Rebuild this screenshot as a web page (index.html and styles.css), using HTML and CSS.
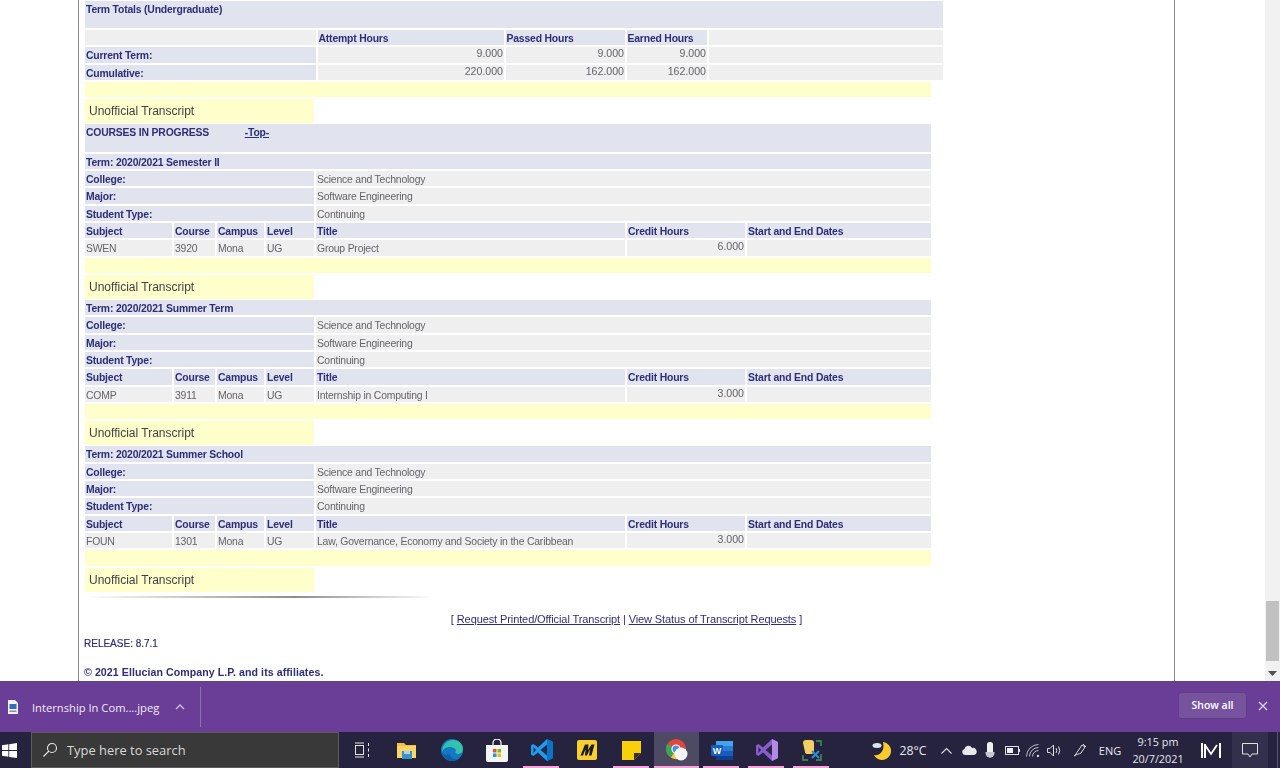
FILE: index.html
```html
<!DOCTYPE html>
<html lang="en">
<head>
<meta charset="utf-8">
<title>Academic Transcript</title>
<link rel="stylesheet" href="styles.css">
</head>
<body>
<div class="viewport">
  <main class="page">
    <section class="totals">
      <div class="cell head span-all tall">Term Totals (Undergraduate)</div>
      <div class="cell plain"></div>
      <div class="cell head">Attempt Hours</div>
      <div class="cell head">Passed Hours</div>
      <div class="cell head">Earned Hours</div>
      <div class="cell plain"></div>
      <div class="cell head">Current Term:</div>
      <div class="cell plain num">9.000</div>
      <div class="cell plain num">9.000</div>
      <div class="cell plain num">9.000</div>
      <div class="cell plain"></div>
      <div class="cell head">Cumulative:</div>
      <div class="cell plain num">220.000</div>
      <div class="cell plain num">162.000</div>
      <div class="cell plain num">162.000</div>
      <div class="cell plain"></div>
    </section>
    <div class="yellow-bar"></div>
    <div class="transcript">Unofficial Transcript</div>
    <div class="cell head courses">COURSES IN PROGRESS <a class="top-link" href="#">-Top-</a></div>

    <section class="term">
      <div class="cell head span-all">Term: 2020/2021 Semester II</div>
      <div class="cell head label">College:</div><div class="cell plain value">Science and Technology</div>
      <div class="cell head label">Major:</div><div class="cell plain value">Software Engineering</div>
      <div class="cell head label">Student Type:</div><div class="cell plain value">Continuing</div>
      <div class="cell head">Subject</div><div class="cell head">Course</div><div class="cell head">Campus</div><div class="cell head">Level</div><div class="cell head">Title</div><div class="cell head">Credit Hours</div><div class="cell head">Start and End Dates</div>
      <div class="cell plain">SWEN</div><div class="cell plain">3920</div><div class="cell plain">Mona</div><div class="cell plain">UG</div><div class="cell plain">Group Project</div><div class="cell plain num">6.000</div><div class="cell plain"></div>
      <div class="cell yellow span-all"></div>
    </section>
    <div class="transcript after-term">Unofficial Transcript</div>

    <section class="term">
      <div class="cell head span-all">Term: 2020/2021 Summer Term</div>
      <div class="cell head label">College:</div><div class="cell plain value">Science and Technology</div>
      <div class="cell head label">Major:</div><div class="cell plain value">Software Engineering</div>
      <div class="cell head label">Student Type:</div><div class="cell plain value">Continuing</div>
      <div class="cell head">Subject</div><div class="cell head">Course</div><div class="cell head">Campus</div><div class="cell head">Level</div><div class="cell head">Title</div><div class="cell head">Credit Hours</div><div class="cell head">Start and End Dates</div>
      <div class="cell plain">COMP</div><div class="cell plain">3911</div><div class="cell plain">Mona</div><div class="cell plain">UG</div><div class="cell plain">Internship in Computing I</div><div class="cell plain num">3.000</div><div class="cell plain"></div>
      <div class="cell yellow span-all"></div>
    </section>
    <div class="transcript after-term">Unofficial Transcript</div>

    <section class="term">
      <div class="cell head span-all">Term: 2020/2021 Summer School</div>
      <div class="cell head label">College:</div><div class="cell plain value">Science and Technology</div>
      <div class="cell head label">Major:</div><div class="cell plain value">Software Engineering</div>
      <div class="cell head label">Student Type:</div><div class="cell plain value">Continuing</div>
      <div class="cell head">Subject</div><div class="cell head">Course</div><div class="cell head">Campus</div><div class="cell head">Level</div><div class="cell head">Title</div><div class="cell head">Credit Hours</div><div class="cell head">Start and End Dates</div>
      <div class="cell plain">FOUN</div><div class="cell plain">1301</div><div class="cell plain">Mona</div><div class="cell plain">UG</div><div class="cell plain">Law, Governance, Economy and Society in the Caribbean</div><div class="cell plain num">3.000</div><div class="cell plain"></div>
      <div class="cell yellow span-all"></div>
    </section>
    <div class="transcript after-term">Unofficial Transcript</div>

    <div class="rule"></div>
    <p class="links">[ <a href="#">Request Printed/Official Transcript</a> | <a href="#">View Status of Transcript Requests</a> ]</p>
    <p class="release">RELEASE: 8.7.1</p>
    <p class="copyright">© 2021 Ellucian Company L.P. and its affiliates.</p>
  </main>
  <aside class="scrollbar">
    <div class="thumb"></div>
    <svg class="arrow" width="9" height="5" viewBox="0 0 9 5"><path d="M0 0h9L4.500 5z" fill="#505050"/></svg>
  </aside>
</div>

<div class="downloads">
  <div class="dl-item">
    <svg width="12" height="14" viewBox="0 0 12 14"><path d="M1 0h7l3 3v11H1z" fill="#f2f2f6"/><rect x="2.500" y="4" width="7" height="5" fill="#2f6fb5"/><rect x="2.500" y="10.500" width="7" height="1.500" fill="#8a8aa0"/></svg>
    <span class="dl-name">Internship In Com....jpeg</span>
    <svg class="dl-chevron" width="10" height="6" viewBox="0 0 10 6"><path d="M1 5l4-4 4 4" fill="none" stroke="#c9bfdc" stroke-width="1.400"/></svg>
  </div>
  <button class="show-all" type="button">Show all</button>
  <svg class="dl-close" width="10" height="10" viewBox="0 0 10 10"><path d="M1 1l8 8M9 1l-8 8" stroke="#d8d0e6" stroke-width="1.400"/></svg>
</div>

<footer class="taskbar">
  <div class="start">
    <svg width="15" height="15" viewBox="0 0 16 16"><path d="M0 2.300l6.800-1V7.500H0zM7.700 1.200L16 0v7.500H7.700zM0 8.500h6.800v6.200L0 13.700zM7.700 8.500H16V16l-8.300-1.200z" fill="#fff"/></svg>
  </div>
  <div class="search">
    <svg width="16" height="16" viewBox="0 0 16 16"><circle cx="10" cy="6" r="4.500" fill="none" stroke="#e8e8e8" stroke-width="1.100"/><path d="M6.800 9.200L1.500 14.500" stroke="#e8e8e8" stroke-width="1.200"/></svg>
    <span>Type here to search</span>
  </div>
  <div class="slot">
    <svg width="16" height="16" viewBox="0 0 16 16"><path d="M1 1h9M1 15h9" stroke="#e4e4e4"/><rect x="1.500" y="3.500" width="8" height="9" fill="none" stroke="#e4e4e4"/><path d="M14.500 1v3M14.500 6.500v3M14.500 12v3" stroke="#e4e4e4"/></svg>
  </div>
  <div class="slot">
    <svg width="20" height="17" viewBox="0 0 20 17"><path d="M0 1h7l2 2h10v13H0z" fill="#f4bf45"/><path d="M0 4h19v12H0z" fill="#fbd667"/><rect x="5" y="9" width="10" height="8" fill="#3b90c9"/><rect x="7" y="9" width="6" height="3" fill="#a9d5ec"/></svg>
  </div>
  <div class="slot">
    <svg width="22" height="22" viewBox="0 0 22 22"><circle cx="11" cy="11" r="11" fill="#1478c4"/><path d="M1 13C1 6 6 1 12 1c6 0 10 4 10 9 0 3-2 5-5 5-2 0-3-1-3-2 1-1 1-3-1-4C9 7 3 8 1 13z" fill="#35c1b0"/><path d="M22 10c0 3-2 5-5 5-2 0-3-1-3-2 1-1 1-3-1-3-3-1-5 2-4 5 1 3 4 6 9 4-1 1-1 1 0 0 2-2 4-5 4-9z" fill="#1478c4"/><path d="M9 15c0 3 3 6 8 5-2 1-4 2-6 2-4 0-8-3-10-8 2 2 5 2 8 1z" fill="#0f5fa8"/></svg>
  </div>
  <div class="slot">
    <svg width="22" height="23" viewBox="0 0 22 23"><path d="M7 7V4a4 4 0 0 1 8 0v3" fill="none" stroke="#f2f2f2" stroke-width="1.300"/><path d="M0 6h22v15a2 2 0 0 1-2 2H2a2 2 0 0 1-2-2z" fill="#f5f5f5"/><rect x="7" y="10" width="3.500" height="3.500" fill="#f25022"/><rect x="11.500" y="10" width="3.500" height="3.500" fill="#7fba00"/><rect x="7" y="14.500" width="3.500" height="3.500" fill="#00a4ef"/><rect x="11.500" y="14.500" width="3.500" height="3.500" fill="#ffb900"/></svg>
  </div>
  <div class="slot running">
    <svg width="22" height="22" viewBox="0 0 22 22"><path d="M16 0l6 3v16l-6 3-9-8.500L2.500 17 0 15.500V6.500L2.500 5 7 8.500z" fill="#1f9cf0"/><path d="M16 5.500L9.500 11l6.500 5.500z" fill="#26283f"/><path d="M2.500 8L5 11l-2.500 3z" fill="#26283f"/><path d="M16 0l6 3v16l-6 3z" fill="#0a74c9"/></svg>
  </div>
  <div class="slot">
    <svg width="20" height="20" viewBox="0 0 20 20"><rect width="20" height="20" rx="2" fill="#f8cf2f"/><path d="M8 4.500L3.500 15.500H6L8.500 9 8 15.500h2L13 9l-1 6.500h2.500l3-11h-3L11 10l.5-5.500z" fill="#1c1c28"/></svg>
  </div>
  <div class="slot running">
    <svg width="19" height="19" viewBox="0 0 19 19"><path d="M0 0h19v12l-7 7H0z" fill="#f9d10b"/><path d="M19 12l-7 7v-7z" fill="#3a3424"/></svg>
  </div>
  <div class="slot running active">
    <svg width="22" height="22" viewBox="0 0 22 22"><circle cx="10" cy="10" r="10" fill="#e0483c"/><path d="M10 10L1.300 5A10 10 0 0 0 5 18.700z" fill="#3aa757"/><path d="M10 10h10a10 10 0 0 1-15 8.700z" fill="#f9c932"/><circle cx="10" cy="10" r="4.600" fill="#fff"/><circle cx="10" cy="10" r="3.500" fill="#4a90e2"/><circle cx="15" cy="15" r="6.500" fill="#f5f5f5"/></svg>
  </div>
  <div class="slot running">
    <svg width="22" height="19" viewBox="0 0 22 19"><path d="M5 0h17v19H5z" fill="#2b7cd3"/><path d="M5 0h17v5H5z" fill="#41a5ee"/><path d="M5 10h17v5H5z" fill="#185abd"/><path d="M5 15h17v4H5z" fill="#103f91"/><rect y="4" width="12" height="11" rx="1" fill="#185abd"/><text class="word-w" x="6" y="13">W</text></svg>
  </div>
  <div class="slot running">
    <svg width="22" height="22" viewBox="0 0 22 22"><path d="M16 0l6 3v16l-6 3-9-8.500L2.500 17 0 15.500V6.500L2.500 5 7 8.500z" fill="#8a5ad0"/><path d="M16 5.500L9.500 11l6.500 5.500z" fill="#26283f"/><path d="M2.500 8L5 11l-2.500 3z" fill="#26283f"/><path d="M16 0l6 3v16l-6 3z" fill="#b18ae6"/></svg>
  </div>
  <div class="slot running">
    <svg width="20" height="22" viewBox="0 0 20 22"><path d="M1 4Q1 1 4 1h5q3 0 3 3v8q0 3-3 3H6q-3 0-3-2z" fill="#f4cf66"/><path d="M14 2h5v5M1 16v5h5M19 15v6h-5" fill="none" stroke="#3f9a55" stroke-width="1.400"/><path d="M10 12l7 7M17 12l-7 7" stroke="#2f8fd0" stroke-width="2"/></svg>
  </div>
  <div class="tray">
    <div class="t w-moon">
      <svg width="19" height="19" viewBox="0 0 19 19"><path d="M11 1a9 9 0 1 1-9 13c6 1 11-4 9-13z" fill="#f8cb2e"/><ellipse cx="5" cy="4.500" rx="4.500" ry="2.500" fill="#d9e6f2"/></svg>
    </div>
    <div class="t w-temp">28°C</div>
    <div class="t w-chev"><svg width="11" height="7" viewBox="0 0 11 7"><path d="M.5 6.500l5-5 5 5" fill="none" stroke="#ddd" stroke-width="1.100"/></svg></div>
    <div class="t w-cloud"><svg width="15" height="10" viewBox="0 0 15 10"><path d="M3 10a3 3 0 0 1-.5-5.900A4 4 0 0 1 10 3a3.500 3.500 0 0 1 2 7z" fill="#e8e8ee"/></svg></div>
    <div class="t w-mic"><svg width="10" height="16" viewBox="0 0 10 16"><rect x="2" width="6" height="12" rx="2.500" fill="#f0f0f0"/><path d="M.5 10v1a4.500 4.500 0 0 0 9 0v-1" fill="#c8c8d0"/><path d="M5 14v2" stroke="#ccc"/></svg></div>
    <div class="t w-batt"><svg width="15" height="9" viewBox="0 0 15 9"><rect x=".5" y=".5" width="13" height="8" fill="none" stroke="#ddd"/><rect x="2" y="2" width="6" height="5" fill="#eee"/><rect x="14" y="3" width="1" height="3" fill="#ddd"/></svg></div>
    <div class="t w-wifi"><svg width="15" height="13" viewBox="0 0 15 13"><path d="M.5 12.500A12 12 0 0 1 12.500.5M3.500 12.500a9 9 0 0 1 9-9M6.500 12.500a6 6 0 0 1 6-6" fill="none" stroke="#bdbdc8"/><circle cx="12" cy="12" r="1.200" fill="#ddd"/></svg></div>
    <div class="t w-vol"><svg width="15" height="13" viewBox="0 0 15 13"><path d="M.5 4.500h2.500L6.500 1v11L3 8.500H.5z" fill="none" stroke="#ddd"/><path d="M9 4q1.500 2.500 0 5M11.500 2.500q2.500 4 0 8" fill="none" stroke="#ddd"/></svg></div>
    <div class="t w-pen"><svg width="14" height="14" viewBox="0 0 14 14"><path d="M1 13c2-1 2-3 4-5l4-6 3 2-4 6c-2 1-4 1-7 3z" fill="none" stroke="#ddd"/><path d="M10 1l3 3" stroke="#ddd"/></svg></div>
    <div class="t w-eng">ENG</div>
    <div class="t w-clock"><span>9:15 pm</span><span>20/7/2021</span></div>
    <div class="t w-mi"><svg width="20" height="15" viewBox="0 0 20 15"><path d="M1 0v15M4 1v14M19 0v15" stroke="#fff" stroke-width="2"/><path d="M4 2l6 9 6-9" fill="none" stroke="#fff" stroke-width="1.800"/></svg></div>
    <div class="t w-notif"><svg width="16" height="15" viewBox="0 0 16 15"><path d="M.5.500h15v10.500H10l-2 3-2-3H.5z" fill="none" stroke="#e0e0e0"/></svg></div>
    <div class="t w-end"></div>
  </div>
</footer>
</body>
</html>
```
FILE: styles.css
```css
* { box-sizing: border-box; }
html, body { margin: 0; padding: 0; }
body {
  width: 1280px;
  height: 768px;
  overflow: hidden;
  display: flex;
  flex-direction: column;
  background: #fff;
  font-family: "Liberation Sans", Arial, sans-serif;
}
.viewport { height: 681px; display: flex; overflow: hidden; flex: none; }
.page {
  width: 1097px;
  height: 681px;
  margin-left: 78px;
  margin-right: 90px;
  padding: 1px 0 0 6px;
  border-left: 1px solid #8a8a8a;
  border-right: 1px solid #8a8a8a;
  overflow: hidden;
  font-size: 10.4px;
  filter: blur(.3px);
}
.scrollbar {
  width: 15px;
  background: #f1f1f1;
  padding: 11px 1px 0;
  display: flex;
  flex-direction: column;
  align-items: center;
  margin-left: auto;
  height: 681px;
  justify-content: flex-start;
}
.thumb { width: 13px; height: 60px; margin-top: 590px; background: #c1c1c1; flex: none; }
.arrow { margin-top: 10px; flex: none; }

.totals {
  width: 858px;
  display: grid;
  grid-template-columns: 231px 186.500px 119.500px 80.500px 234.500px;
  grid-template-rows: 27px;
  column-gap: 1.500px;
  row-gap: 2px;
  grid-auto-rows: 15.33px;
}
.totals .num { padding-right: 1px; }
.term {
  width: 846px;
  display: grid;
  grid-template-columns: 87px 41px 47px 48px 309px 118px 184px;
  gap: 2px;
  grid-auto-rows: 15.33px;
}
.cell { padding: 0 1px; line-height: 17.500px; white-space: nowrap; overflow: hidden; }
.head { background: #e1e4ee; color: #2e2e76; font-weight: 700; letter-spacing: -.18px; }
.plain { background: #efefef; color: #63636a; letter-spacing: -.19px; }
.yellow { background: #ffc; }
.span-all { grid-column: 1 / -1; }
.tall { line-height: 17px; }
.label { grid-column: span 4; }
.value { grid-column: span 3; }
.num { text-align: right; line-height: 13px; font-size: 10.6px; letter-spacing: 0; }

.yellow-bar { width: 846px; height: 15.33px; margin-top: 2px; background: #ffc; }
.transcript {
  width: 229px;
  height: 24px;
  margin: 2px 0 1px;
  padding-left: 4px;
  background: #ffc;
  color: #3f3f46;
  font-size: 12px;
  line-height: 25px;
}
.after-term { margin-top: 2px; }
.courses { width: 846px; height: 27.7px; margin-bottom: 1.7px; line-height: 17px; }
.top-link { color: #2e2e76; margin-left: 33px; }

.rule {
  width: 350px;
  height: 2px;
  margin: 4px 0 0 0;
  background: linear-gradient(90deg, #fff, #8c8c8c 60%, #fff);
}
.links { margin: 14px 6px 0 0; text-align: center; color: #2e2e76; font-size: 11px; line-height: 14px; letter-spacing: -.1px; }
.links a { color: #2e2e76; }
.release { margin: 11px 0 0 -1px; color: #2e2e76; font-size: 10px; line-height: 14px; -webkit-text-stroke: .2px #2e2e76; }
.copyright { margin: 14px 0 0 -1px; color: #2e2e76; font-size: 10.6px; line-height: 14px; font-weight: 700; letter-spacing: .07px; }

.downloads {
  height: 51px;
  flex: none;
  display: flex;
  align-items: center;
  background: #6a3d96;
  border-top: 1px solid #5b4a70;
}
.dl-item {
  width: 201px;
  height: 40px;
  padding-left: 7px;
  display: flex;
  align-items: center;
  border-right: 1px solid #8e72ad;
}
.dl-name { margin-left: 13px; color: #f0eaf6; font: 11.2px "Open Sans", sans-serif; white-space: nowrap; }
.dl-chevron { margin-left: 16px; }
.show-all {
  width: 69px;
  height: 27px;
  margin: -4px 0 0 auto;
  padding: 0;
  background: #76529f;
  border: 1px solid #5d3f82;
  border-radius: 3px;
  color: #fff;
  font: 600 10.5px "Open Sans", sans-serif;
}
.dl-close { margin: -2px 12px 0 11px; }

.taskbar {
  height: 36px;
  flex: none;
  display: flex;
  background: #26233f;
}
.start { width: 31px; display: flex; align-items: center; justify-content: center; padding-right: 12px; }
.search {
  width: 308px;
  display: flex;
  align-items: center;
  gap: 9px;
  padding-left: 10px;
  background: #393939;
  border: 1px solid #5c5c5c;
  color: #d8d8d8;
  font: 12.9px "Open Sans", sans-serif;
}
.slot { width: 45px; position: relative; display: flex; align-items: center; justify-content: center; }
.running::after {
  content: "";
  position: absolute;
  left: 4px;
  right: 5px;
  bottom: 0;
  height: 2px;
  background: #f5a6d8;
}
.active { background: #4d4a63; }
.active::after { left: 0; right: 0; }
.word-w { fill: #fff; font: 700 9px "Liberation Sans", sans-serif; text-anchor: middle; }

.tray { margin-left: auto; display: flex; color: #e8e8ee; font: 12px "Open Sans", sans-serif; }
.t { display: flex; align-items: center; justify-content: center; }
.w-moon { width: 24px; }
.w-temp { width: 40px; font-size: 12.3px; }
.w-chev { width: 26px; }
.w-cloud { width: 20px; }
.w-mic { width: 22px; }
.w-batt { width: 22px; }
.w-wifi { width: 21px; }
.w-vol { width: 20px; }
.w-pen { width: 32px; }
.w-eng { width: 28px; font-size: 11px; }
.w-clock { width: 68px; flex-direction: column; font-size: 10.8px; line-height: 17px; }
.w-mi { width: 38px; }
.w-notif { width: 36px; margin: 0 2px; background: #33304b; }
.w-end { width: 10px; position: relative; }
.w-end::before { content: ""; width: 1px; height: 100%; margin-left: 5px; background: #56546c; }
```
